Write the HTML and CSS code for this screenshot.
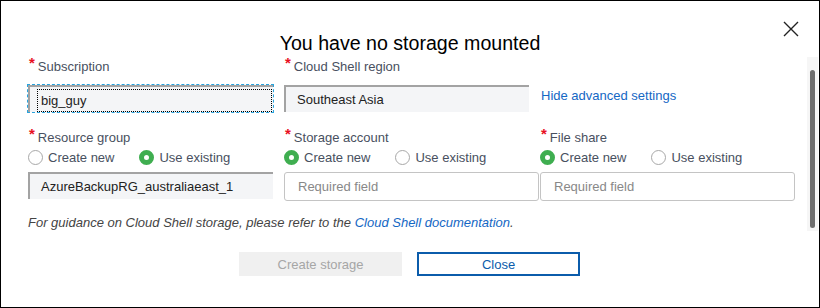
FILE: index.html
```html
<!DOCTYPE html>
<html lang="en">
<head>
  <meta charset="UTF-8" />
  <title>Cloud Shell storage</title>
  <link rel="stylesheet" href="styles.css">
</head>
<body>
  <div class="dialog">
    <button class="close-x" title="Close">
      <svg width="16" height="16" viewBox="0 0 16 16"><path d="M1 1 L15 15 M15 1 L1 15" stroke="#222" stroke-width="1.4" fill="none"/></svg>
    </button>

    <div class="scroll-track"><div class="scroll-thumb"></div></div>

    <div class="content">
      <h1 class="title">You have no storage mounted</h1>

      <!-- Row 1 -->
      <div class="form-row">
        <div class="field">
          <label class="field-label"><span class="req">*</span>Subscription</label>
          <div class="focus-ring">
            <div class="input readonly first"><span class="dotted">big_guy</span></div>
          </div>
        </div>
        <div class="field">
          <label class="field-label"><span class="req">*</span>Cloud Shell region</label>
          <div class="input readonly region">Southeast Asia</div>
        </div>
        <div class="field">
          <a class="adv-link" href="#">Hide advanced settings</a>
        </div>
      </div>

      <!-- Row 2 -->
      <div class="form-row second">
        <div class="field">
          <label class="field-label"><span class="req">*</span>Resource group</label>
          <div class="radios">
            <span class="radio"><span class="dot"></span>Create new</span>
            <span class="radio on"><span class="dot"></span>Use existing</span>
          </div>
          <div class="input readonly rg">AzureBackupRG_australiaeast_1</div>
        </div>
        <div class="field">
          <label class="field-label"><span class="req">*</span>Storage account</label>
          <div class="radios">
            <span class="radio on"><span class="dot"></span>Create new</span>
            <span class="radio"><span class="dot"></span>Use existing</span>
          </div>
          <div class="input text sa">Required field</div>
        </div>
        <div class="field">
          <label class="field-label"><span class="req">*</span>File share</label>
          <div class="radios">
            <span class="radio on"><span class="dot"></span>Create new</span>
            <span class="radio"><span class="dot"></span>Use existing</span>
          </div>
          <div class="input text fs">Required field</div>
        </div>
      </div>

      <p class="note">For guidance on Cloud Shell storage, please refer to the <a href="#">Cloud Shell documentation</a>.</p>

      <div class="actions">
        <button class="btn disabled">Create storage</button>
        <button class="btn outline">Close</button>
      </div>
    </div>
  </div>
</body>
</html>
```

FILE: styles.css
```css
body {
  margin: 0;
  font-family: "Liberation Sans", Arial, sans-serif;
  background: #fff;
  color: #333;
}

.dialog {
  position: relative;
  width: 820px;
  height: 308px;
  box-sizing: border-box;
  border: 1px solid #000;
  background: #fff;
  overflow: hidden;
}

/* Close icon */
.close-x {
  position: absolute;
  top: 20px;
  right: 20px;
  background: transparent;
  border: none;
  padding: 0;
  width: 16px;
  height: 16px;
  cursor: pointer;
}

/* Scrollbar */
.scroll-track {
  position: absolute;
  top: 56px;
  right: 1px;
  width: 11px;
  height: 174px;
  background: #f6f6f6;
}

.scroll-thumb {
  margin: 13px 0 0 3px;
  width: 5px;
  height: 158px;
  border-radius: 3px;
  background: #6e6e6e;
}

.content {
  padding: 0 0 0 27px;
}

.title {
  margin: 30px 0 0;
  font-size: 19.6px;
  font-weight: normal;
  line-height: 24px;
  color: #000;
  text-align: center;
  padding-right: 27px;
}

/* Form grid */
.form-row {
  display: grid;
  grid-template-columns: 256px 256px 256px;
  margin-top: 4px;
}

.form-row.second {
  margin-top: 17px;
}

.field-label {
  display: block;
  font-size: 13px;
  line-height: 16px;
  height: 16px;
  color: #485060;
  padding-left: 1px;
}

.req {
  color: #e81123;
  font-size: 15px;
  font-weight: bold;
  line-height: 0;
  position: relative;
  top: -3px;
  margin-right: 3px;
}

.input {
  box-sizing: border-box;
  font-size: 13px;
  color: #222;
  display: flex;
  align-items: center;
}

.input.readonly {
  background: #f4f5f7;
  border-top: 2px solid #a3a3a3;
  border-left: 2px solid #a3a3a3;
  height: 27px;
}

.focus-ring {
  margin: 9px 0 0 -1px;
  width: 247px;
  height: 29px;
  box-sizing: border-box;
  border: 1px dashed #2aa3dc;
}

.input.first {
  width: 245px;
  padding-left: 7px;
}

.dotted {
  flex: 1;
  height: 23px;
  line-height: 21px;
  box-sizing: border-box;
  border: 1px dotted #000;
  padding-left: 3px;
  margin-top: 1px;
  margin-right: 1px;
}

.region {
  margin-top: 10px;
  width: 245px;
  padding-left: 11px;
}

.adv-link {
  display: block;
  margin-top: 29px;
  font-size: 13px;
  color: #1467c4;
  text-decoration: none;
  padding-left: 1px;
}

.radios {
  display: flex;
  gap: 25px;
  margin-top: 3px;
  height: 16px;
  align-items: center;
}

.radio {
  display: flex;
  align-items: center;
  font-size: 13px;
  color: #485060;
}

.dot {
  width: 15px;
  height: 15px;
  box-sizing: border-box;
  border: 1px solid #a8a8a8;
  border-radius: 50%;
  background: #fff;
  margin-right: 5px;
}

.radio.on .dot {
  border: 5px solid #3fae50;
}

.rg {
  margin-top: 7px;
  width: 245px;
  height: 27px;
  padding-left: 11px;
}

.input.text {
  margin-top: 7px;
  height: 29px;
  border: 1px solid #c4c4c4;
  border-radius: 3px;
  color: #888;
  padding-left: 13px;
}

.sa {
  width: 255px;
}

.fs {
  width: 255px;
}

.note {
  margin: 14px 0 0;
  font-size: 13px;
  line-height: 16px;
  font-style: italic;
  color: #444;
}

.note a {
  color: #1467c4;
  text-decoration: none;
}

.actions {
  display: flex;
  justify-content: center;
  gap: 15px;
  margin-top: 21px;
  padding-right: 28px;
}

.btn {
  width: 163px;
  height: 24px;
  font-family: "Liberation Sans", Arial, sans-serif;
  font-size: 13px;
  box-sizing: border-box;
  cursor: pointer;
}

.btn.disabled {
  background: #f0f0f0;
  border: none;
  color: #a6a6a6;
}

.btn.outline {
  background: #fff;
  border: 2px solid #0b5cab;
  color: #0b5cab;
}
```
